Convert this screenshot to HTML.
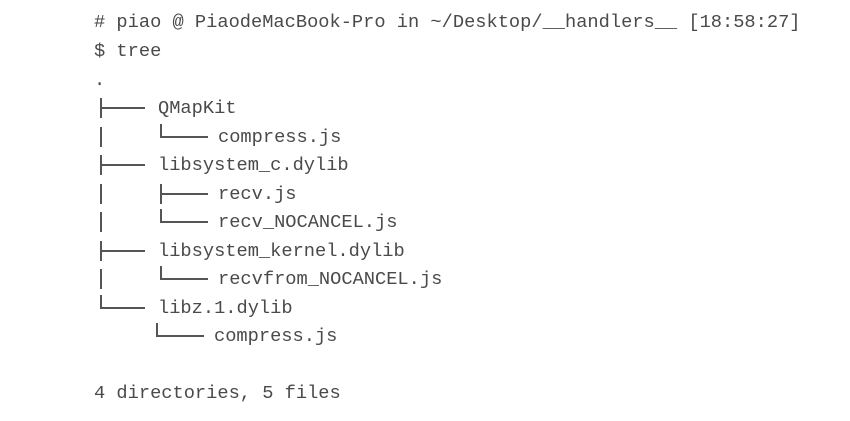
<!DOCTYPE html>
<html><head><meta charset="utf-8"><style>
html,body{margin:0;padding:0;background:#fff;width:850px;height:421px;overflow:hidden}
.t{position:absolute;font-family:"Liberation Mono",monospace;font-size:18.7px;color:#4a4a4a;white-space:pre;line-height:20px;height:20px}
.v{position:absolute;width:2px;background:#555}
.h{position:absolute;height:2px;background:#555}
</style></head><body>
<div class="t" style="left:94px;top:12px"># piao @ PiaodeMacBook-Pro in ~/Desktop/__handlers__ [18:58:27]</div>
<div class="t" style="left:94px;top:41px">$ tree</div>
<div class="t" style="left:94px;top:70px">.</div>

<div class="v" style="left:100px;top:98px;height:20px"></div><div class="h" style="left:100px;top:107px;width:45px"></div>
<div class="t" style="left:158px;top:98px">QMapKit</div>
<div class="v" style="left:100px;top:127px;height:20px"></div>
<div class="v" style="left:160px;top:124px;height:14px"></div><div class="h" style="left:160px;top:136px;width:48px"></div>
<div class="t" style="left:218px;top:127px">compress.js</div>

<div class="v" style="left:100px;top:155px;height:20px"></div><div class="h" style="left:100px;top:164px;width:45px"></div>
<div class="t" style="left:158px;top:155px">libsystem_c.dylib</div>
<div class="v" style="left:100px;top:184px;height:20px"></div>
<div class="v" style="left:160px;top:184px;height:20px"></div><div class="h" style="left:160px;top:193px;width:48px"></div>
<div class="t" style="left:218px;top:184px">recv.js</div>
<div class="v" style="left:100px;top:212px;height:20px"></div>
<div class="v" style="left:160px;top:209px;height:14px"></div><div class="h" style="left:160px;top:221px;width:48px"></div>
<div class="t" style="left:218px;top:212px">recv_NOCANCEL.js</div>

<div class="v" style="left:100px;top:241px;height:20px"></div><div class="h" style="left:100px;top:250px;width:45px"></div>
<div class="t" style="left:158px;top:241px">libsystem_kernel.dylib</div>
<div class="v" style="left:100px;top:269px;height:20px"></div>
<div class="v" style="left:160px;top:266px;height:14px"></div><div class="h" style="left:160px;top:278px;width:48px"></div>
<div class="t" style="left:218px;top:269px">recvfrom_NOCANCEL.js</div>

<div class="v" style="left:100px;top:295px;height:14px"></div><div class="h" style="left:100px;top:307px;width:45px"></div>
<div class="t" style="left:158px;top:298px">libz.1.dylib</div>
<div class="v" style="left:156px;top:323px;height:14px"></div><div class="h" style="left:156px;top:335px;width:48px"></div>
<div class="t" style="left:214px;top:326px">compress.js</div>

<div class="t" style="left:94px;top:383px">4 directories, 5 files</div>
</body></html>
